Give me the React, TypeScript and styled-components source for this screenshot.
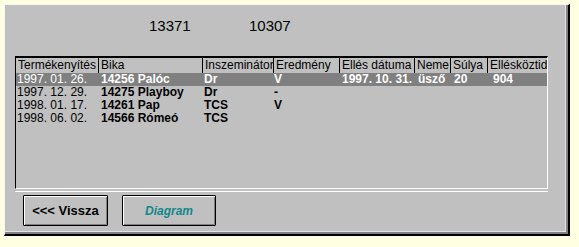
import React from "react";
import styled, { createGlobalStyle } from "styled-components";

const GlobalStyle = createGlobalStyle`
  html, body { margin: 0; padding: 0; background: #ffffe1; }
  body { font-family: "Liberation Sans", Arial, sans-serif; color: #000; }
`;

const Page = styled.div`
  box-sizing: border-box;
  width: 579px;
  height: 247px;
  padding: 4px 0 0 4px;
  overflow: hidden;
`;

const Frame = styled.div`
  position: relative;
  box-sizing: border-box;
  width: 566px;
  height: 232px;
  background: #c0c0c0;
  border-style: solid;
  border-color: #f4f4f4 #000 #000 #f4f4f4;
  border-width: 1px 2px 2px 1px;
  box-shadow: inset -2px -2px 0 #808080, inset -3px -3px 0 #e2e2e2;
  display: flex;
  flex-direction: column;

  &::before {
    content: "";
    position: absolute;
    left: 6px;
    top: 6px;
    width: 566px;
    height: 232px;
    z-index: -1;
    background-image: repeating-conic-gradient(#000 0% 25%, transparent 0% 50%);
    background-size: 2px 2px;
  }
`;

const TopRow = styled.div`
  box-sizing: border-box;
  height: 51px;
  padding: 12px 0 0 144px;
  display: grid;
  grid-template-columns: 100px 100px;
  align-items: start;
  font-size: 15px;
  line-height: 17px;
`;

const Counter = styled.span``;

const ListFrame = styled.div`
  margin-left: 10px;
  width: 533px;
  padding-bottom: 2px;
  border-bottom: 1px solid #fff;
`;

const ListBox = styled.div`
  box-sizing: border-box;
  height: 133px;
  border-top: 2px solid #000;
  border-left: 1px solid #000;
  border-right: 1px solid #fff;
  border-bottom: 1px solid #fff;
  overflow: hidden;
  font-size: 12px;
`;

const COLS = "83px 104px 71px 66px 75px 36px 37px 59px";

const HeaderRow = styled.div`
  display: grid;
  grid-template-columns: ${COLS};
  height: 15px;
`;

const HeaderCell = styled.div<{ $last?: boolean }>`
  box-sizing: border-box;
  padding-left: 2px;
  line-height: 15px;
  white-space: nowrap;
  overflow: hidden;
  border-right: ${(p) => (p.$last ? "none" : "1px solid #000")};
`;

const Row = styled.div<{ $selected?: boolean }>`
  display: grid;
  grid-template-columns: ${COLS};
  height: 13px;
  line-height: 13px;
  background: ${(p) => (p.$selected ? "#808080" : "transparent")};
  color: ${(p) => (p.$selected ? "#fff" : "#000")};
`;

const Cell = styled.div<{ $bold?: boolean; $pad?: number }>`
  box-sizing: border-box;
  padding-left: ${(p) => (p.$pad ?? 2)}px;
  white-space: nowrap;
  overflow: hidden;
  font-weight: ${(p) => (p.$bold ? "bold" : "normal")};
`;

const ButtonRow = styled.div`
  display: flex;
  gap: 14px;
  padding-left: 18px;
  margin-top: 3px;
`;

const Button = styled.button<{ $w: number; $accent?: boolean }>`
  box-sizing: border-box;
  width: ${(p) => p.$w}px;
  height: 31px;
  padding: 0;
  margin: 0;
  background: #c0c0c0;
  border: 1px solid #000;
  border-radius: 1px;
  box-shadow: inset 1px 1px 0 #fff, inset -1px -1px 0 #808080;
  font-family: "Liberation Sans", Arial, sans-serif;
  font-weight: bold;
  font-size: ${(p) => (p.$accent ? 12 : 13)}px;
  font-style: ${(p) => (p.$accent ? "italic" : "normal")};
  color: ${(p) => (p.$accent ? "#108888" : "#000")};
`;

const headers = [
  "Termékenyítés",
  "Bika",
  "Inszeminátor",
  "Eredmény",
  "Ellés dátuma",
  "Neme",
  "Súlya",
  "Ellésköztidő",
];

const pads = [1, 2, 1, 0, 2, 3, 3, 5];

const rows: string[][] = [
  ["1997. 01. 26.", "14256 Palóc", "Dr", "V", "1997. 10. 31.", "üsző", "20", "904"],
  ["1997. 12. 29.", "14275 Playboy", "Dr", "-", "", "", "", ""],
  ["1998. 01. 17.", "14261 Pap", "TCS", "V", "", "", "", ""],
  ["1998. 06. 02.", "14566 Rómeó", "TCS", "", "", "", "", ""],
];

export default function App() {
  return (
    <>
      <GlobalStyle />
      <Page>
        <Frame>
          <TopRow>
            <Counter>13371</Counter>
            <Counter>10307</Counter>
          </TopRow>
          <ListFrame>
            <ListBox>
              <HeaderRow>
                {headers.map((h, i) => (
                  <HeaderCell key={h} $last={i === headers.length - 1}>
                    {h}
                  </HeaderCell>
                ))}
              </HeaderRow>
              {rows.map((r, ri) => (
                <Row key={ri} $selected={ri === 0}>
                  {r.map((c, ci) => (
                    <Cell key={ci} $bold={ci > 0} $pad={pads[ci]}>
                      {c}
                    </Cell>
                  ))}
                </Row>
              ))}
            </ListBox>
          </ListFrame>
          <ButtonRow>
            <Button $w={85}>{"<<< Vissza"}</Button>
            <Button $w={94} $accent>
              Diagram
            </Button>
          </ButtonRow>
        </Frame>
      </Page>
    </>
  );
}
